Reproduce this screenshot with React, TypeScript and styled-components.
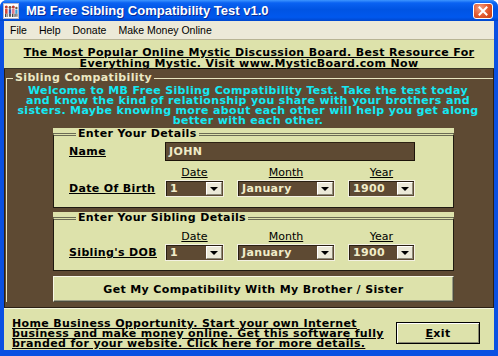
import styled, { createGlobalStyle } from 'styled-components'

const GlobalStyle = createGlobalStyle`
  html, body { margin: 0; padding: 0; background: #ffffff; }
  #root { width: 498px; height: 356px; }
`

const boldText = `
  font-family: "DejaVu Sans", Verdana, sans-serif;
  font-weight: bold;
  font-size: 11px;
  letter-spacing: 0.35px;
`

const Window = styled.div`
  width: 498px;
  height: 356px;
  display: flex;
  flex-direction: column;
  background: #0a50e2;
  border-radius: 7px 7px 0 0;
  overflow: hidden;
`

const TitleBar = styled.div`
  height: 21px;
  flex: none;
  display: flex;
  align-items: center;
  gap: 7px;
  padding: 0 5px 0 3px;
  background: linear-gradient(180deg, #3d95ff 0%, #0a62f2 14%, #0054e3 45%, #0058ee 82%, #0046cc 100%);
`

const TitleText = styled.div`
  flex: 1;
  color: #ffffff;
  font: bold 13px "Liberation Sans", Arial, sans-serif;
  text-shadow: 1px 1px 0 #0b2a95;
  white-space: nowrap;
`

const CloseButton = styled.div`
  width: 20px;
  height: 16px;
  box-sizing: border-box;
  border: 1px solid #ffffff;
  border-radius: 3px;
  background: radial-gradient(circle at 35% 30%, #f4a185 0%, #e35a2f 50%, #c23c12 100%);
  display: flex;
  align-items: center;
  justify-content: center;
`

const Frame = styled.div`
  flex: 1;
  display: flex;
  flex-direction: column;
  padding: 0 4px 6px 4px;
  min-height: 0;
`

const MenuBar = styled.div`
  height: 18px;
  flex: none;
  display: flex;
  align-items: center;
  background: #ece9d8;
  font: 10.5px "Liberation Sans", Tahoma, sans-serif;
  color: #000000;
`

const MenuItem = styled.span`
  padding: 0 6px;
`

const Banner = styled.div`
  height: 30px;
  flex: none;
  box-sizing: border-box;
  padding-top: 7px;
  background: #dde2ab;
  border-top: 1px solid #b8b494;
  border-bottom: 1px solid #3a3526;
  text-align: center;
  ${boldText}
  line-height: 11px;
  color: #000000;
  text-decoration: underline;
`

const BrownPanel = styled.div`
  flex: none;
  background: #5e4a33;
  border: 1px solid #2b2015;
  border-top: none;
  padding: 3px 0 5px 1px;
`

const OuterSet = styled.fieldset`
  margin: 0;
  padding: 0;
  min-inline-size: 0;
  border: none;
  border-top: 1px solid #e9e5bf;
  border-left: 1px solid #e9e5bf;
`

const OuterLegend = styled.legend`
  margin-left: 6px;
  padding: 0 2px;
  ${boldText}
  line-height: 12px;
  color: #ece8c3;
`

const Welcome = styled.div`
  margin-top: 2px;
  padding-right: 4px;
  text-align: center;
  ${boldText}
  line-height: 10px;
  color: #14e9f4;
`

const GroupPanel = styled.div<{ $top: number }>`
  margin: ${p => p.$top}px 0 0 46px;
  width: 401px;
  background: #dde2ab;
`

const GroupSet = styled.fieldset<{ $pad: string }>`
  margin: 0;
  padding: ${p => p.$pad};
  min-inline-size: 0;
  border: 1px solid #1f1a10;
  border-top: 3px double #6b6b55;
`

const GroupLegend = styled.legend`
  margin-left: 7px;
  padding: 0 2px;
  ${boldText}
  line-height: 12px;
  color: #000000;
`

const FormGrid = styled.div`
  display: grid;
  grid-template-columns: 83px 59px 98px 67px;
  column-gap: 13px;
  align-items: center;
`

const FieldLabel = styled.div`
  ${boldText}
  color: #000000;
  text-decoration: underline;
  white-space: nowrap;
`

const NameInput = styled.div`
  grid-column: 2 / 5;
  height: 19px;
  margin-bottom: 6px;
  box-sizing: border-box;
  background: #5e4a33;
  border: 1px solid #1c140a;
  border-top-color: #2e2214;
  padding: 2px 0 0 3px;
  ${boldText}
  line-height: 13px;
  color: #f0ebc8;
`

const NameLabel = styled(FieldLabel)`
  margin-bottom: 6px;
`

const ColHead = styled.div`
  font: 11px "DejaVu Sans", Verdana, sans-serif;
  line-height: 12px;
  padding-bottom: 1px;
  text-align: center;
  text-decoration: underline;
  color: #000000;
`

const SelectBox = styled.div<{ $w: number }>`
  width: ${p => p.$w}px;
  height: 17px;
  box-sizing: border-box;
  display: flex;
  background: #5e4a33;
  border: 1px solid #f3f1e2;
  box-shadow: inset 1px 1px 0 #2a1f12;
  padding: 1px;
`

const SelectValue = styled.div`
  flex: 1;
  padding-left: 3px;
  ${boldText}
  line-height: 13px;
  color: #f1ecc9;
`

const ArrowButton = styled.div`
  width: 16px;
  box-sizing: border-box;
  background: #ece9d8;
  border: 1px solid;
  border-color: #ffffff #8d8a7a #8d8a7a #ffffff;
  display: flex;
  align-items: center;
  justify-content: center;
`

const Arrow = styled.div`
  width: 0;
  height: 0;
  border-left: 4px solid transparent;
  border-right: 4px solid transparent;
  border-top: 4px solid #000000;
`

const BigButton = styled.div`
  margin: 5px 0 0 46px;
  width: 401px;
  height: 26px;
  box-sizing: border-box;
  background: #dde2ab;
  border: 1px solid;
  border-color: #f7f8e6 #4b4b3c #4b4b3c #f7f8e6;
  box-shadow: inset -1px -1px 0 #9a9a84;
  display: flex;
  align-items: center;
  justify-content: center;
  ${boldText}
  color: #000000;
`

const Footer = styled.div`
  flex: 1;
  display: flex;
  justify-content: space-between;
  align-items: flex-start;
  background: #dde2ab;
  border-top: 1px solid #f4f6dc;
  padding: 10px 14px 0 8px;
`

const FooterText = styled.div`
  ${boldText}
  line-height: 10px;
  color: #000000;
  text-decoration: underline;
  white-space: nowrap;
`

const ExitButton = styled.div`
  margin-top: 3px;
  width: 84px;
  height: 22px;
  box-sizing: border-box;
  background: #dde2ab;
  border: 1px solid #000000;
  box-shadow: inset 1px 1px 0 #ffffff, inset -1px -1px 0 #8a8a74;
  display: flex;
  align-items: center;
  justify-content: center;
  ${boldText}
  color: #000000;
`

const Mnemonic = styled.span`
  text-decoration: underline;
`

const AppIcon = () => (
  <svg width="16" height="16" viewBox="0 0 16 16">
    <rect x="0.5" y="0.5" width="15" height="15" fill="#ffffff" stroke="#b8b8c8" />
    <circle cx="3.3" cy="4" r="1.5" fill="#c23a2c" />
    <rect x="2" y="5.8" width="2.6" height="5" fill="#d84a3a" />
    <rect x="2.1" y="10.8" width="0.9" height="3.2" fill="#333" />
    <rect x="3.6" y="10.8" width="0.9" height="3.2" fill="#333" />
    <circle cx="7" cy="4.5" r="1.4" fill="#7a5a3a" />
    <rect x="5.8" y="6.2" width="2.4" height="4.6" fill="#2f55b8" />
    <rect x="5.9" y="10.8" width="0.9" height="3" fill="#333" />
    <rect x="7.2" y="10.8" width="0.9" height="3" fill="#333" />
    <circle cx="10.3" cy="4" r="1.5" fill="#c23a2c" />
    <rect x="9" y="5.8" width="2.6" height="5" fill="#e07a8a" />
    <rect x="9.1" y="10.8" width="0.9" height="3.2" fill="#333" />
    <rect x="10.6" y="10.8" width="0.9" height="3.2" fill="#333" />
    <circle cx="13.4" cy="5" r="1.2" fill="#7a5a3a" />
    <rect x="12.3" y="6.6" width="2.2" height="4.2" fill="#3aa0d8" />
    <rect x="12.4" y="10.8" width="0.8" height="3" fill="#333" />
    <rect x="13.6" y="10.8" width="0.8" height="3" fill="#333" />
  </svg>
)

const CloseIcon = () => (
  <svg width="10" height="10" viewBox="0 0 10 10">
    <path d="M1.5 1.5 L8.5 8.5 M8.5 1.5 L1.5 8.5" stroke="#ffffff" strokeWidth="2" strokeLinecap="square" />
  </svg>
)

const Select = ({ value, width }: { value: string; width: number }) => (
  <SelectBox $w={width}>
    <SelectValue>{value}</SelectValue>
    <ArrowButton>
      <Arrow />
    </ArrowButton>
  </SelectBox>
)

const DateHeads = () => (
  <>
    <div />
    <ColHead>Date</ColHead>
    <ColHead>Month</ColHead>
    <ColHead>Year</ColHead>
  </>
)

const DateSelects = () => (
  <>
    <Select value="1" width={59} />
    <Select value="January" width={98} />
    <Select value="1900" width={67} />
  </>
)

export default function App() {
  return (
    <>
      <GlobalStyle />
      <Window>
        <TitleBar>
          <AppIcon />
          <TitleText>MB Free Sibling Compatibility Test v1.0</TitleText>
          <CloseButton>
            <CloseIcon />
          </CloseButton>
        </TitleBar>
        <Frame>
          <MenuBar>
            <MenuItem>File</MenuItem>
            <MenuItem>Help</MenuItem>
            <MenuItem>Donate</MenuItem>
            <MenuItem>Make Money Online</MenuItem>
          </MenuBar>
          <Banner>
            The Most Popular Online Mystic Discussion Board. Best Resource For
            <br />
            Everything Mystic. Visit www.MysticBoard.com Now
          </Banner>
          <BrownPanel>
            <OuterSet>
              <OuterLegend>Sibling Compatibility</OuterLegend>
              <Welcome>
                Welcome to MB Free Sibling Compatibility Test. Take the test today
                <br />
                and know the kind of relationship you share with your brothers and
                <br />
                sisters. Maybe knowing more about each other will help you get along
                <br />
                better with each other.
              </Welcome>
              <GroupPanel $top={2}>
                <GroupSet $pad="2px 0 10px 15px">
                  <GroupLegend>Enter Your Details</GroupLegend>
                  <FormGrid>
                    <NameLabel>Name</NameLabel>
                    <NameInput>JOHN</NameInput>
                    <DateHeads />
                    <FieldLabel>Date Of Birth</FieldLabel>
                    <DateSelects />
                  </FormGrid>
                </GroupSet>
              </GroupPanel>
              <GroupPanel $top={4}>
                <GroupSet $pad="7px 0 9px 15px">
                  <GroupLegend>Enter Your Sibling Details</GroupLegend>
                  <FormGrid>
                    <DateHeads />
                    <FieldLabel>Sibling's DOB</FieldLabel>
                    <DateSelects />
                  </FormGrid>
                </GroupSet>
              </GroupPanel>
              <BigButton>Get My Compatibility With My Brother / Sister</BigButton>
            </OuterSet>
          </BrownPanel>
          <Footer>
            <FooterText>
              Home Business Opportunity. Start your own Internet
              <br />
              business and make money online. Get this software fully
              <br />
              branded for your website. Click here for more details.
            </FooterText>
            <ExitButton>
              <Mnemonic>E</Mnemonic>xit
            </ExitButton>
          </Footer>
        </Frame>
      </Window>
    </>
  )
}
